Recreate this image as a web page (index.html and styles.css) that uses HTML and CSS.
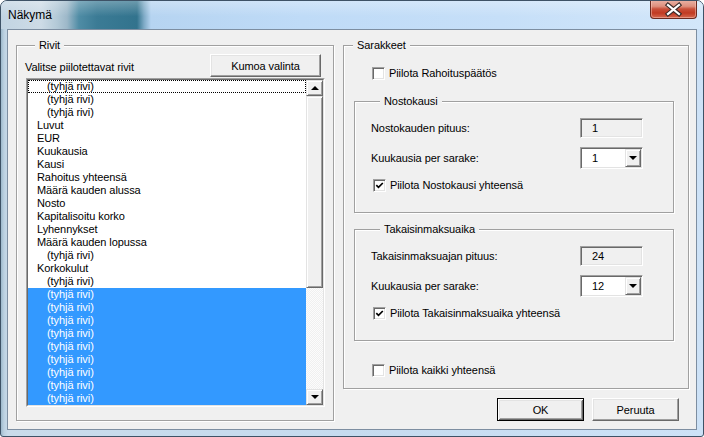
FILE: index.html
```html
<!DOCTYPE html>
<html lang="fi">
<head>
<meta charset="utf-8">
<title>Näkymä</title>
<link rel="stylesheet" href="styles.css">
</head>
<body>
<div class="window">
  <div class="titlebar">
    <span class="title">Näkymä</span>
    <div class="close">
      <svg width="45" height="17" viewBox="0 0 45 17">
        <path d="M17 4 L28 13 M28 4 L17 13" stroke="#3a2a28" stroke-width="4.4" stroke-linecap="square" fill="none"/>
        <path d="M17 4 L28 13 M28 4 L17 13" stroke="#fff" stroke-width="2.2" stroke-linecap="square" fill="none"/>
      </svg>
    </div>
  </div>
  <div class="client">
    <div class="group rivit">
      <div class="group-title">Rivit</div>
      <div class="rivit-head">
        <span class="hint">Valitse piilotettavat rivit</span>
        <button class="btn kumoa">Kumoa valinta</button>
      </div>
      <div class="listbox">
        <div class="list-inner">
          <ul class="items">
            <li class="ind focus">(tyhjä rivi)</li>
            <li class="ind">(tyhjä rivi)</li>
            <li class="ind">(tyhjä rivi)</li>
            <li>Luvut</li>
            <li>EUR</li>
            <li>Kuukausia</li>
            <li>Kausi</li>
            <li>Rahoitus yhteensä</li>
            <li>Määrä kauden alussa</li>
            <li>Nosto</li>
            <li>Kapitalisoitu korko</li>
            <li>Lyhennykset</li>
            <li>Määrä kauden lopussa</li>
            <li class="ind">(tyhjä rivi)</li>
            <li>Korkokulut</li>
            <li class="ind">(tyhjä rivi)</li>
            <li class="ind sel">(tyhjä rivi)</li>
            <li class="ind sel">(tyhjä rivi)</li>
            <li class="ind sel">(tyhjä rivi)</li>
            <li class="ind sel">(tyhjä rivi)</li>
            <li class="ind sel">(tyhjä rivi)</li>
            <li class="ind sel">(tyhjä rivi)</li>
            <li class="ind sel">(tyhjä rivi)</li>
            <li class="ind sel">(tyhjä rivi)</li>
            <li class="ind sel">(tyhjä rivi)</li>
          </ul>
          <div class="vscroll">
            <div class="raised sb-btn"><span class="tri-up"></span></div>
            <div class="raised sb-thumb"></div>
            <div class="sb-track"></div>
            <div class="raised sb-btn"><span class="tri-down"></span></div>
          </div>
        </div>
      </div>
    </div>

    <div class="right">
      <div class="group sarakkeet">
        <div class="group-title">Sarakkeet</div>
        <div class="check first">
          <span class="cb"></span>
          <span>Piilota Rahoituspäätös</span>
        </div>

        <div class="group sub nosto">
          <div class="group-title">Nostokausi</div>
          <div class="field-row">
            <span class="lbl">Nostokauden pituus:</span>
            <span class="ro-field">1</span>
          </div>
          <div class="field-row combo-row">
            <span class="lbl">Kuukausia per sarake:</span>
            <span class="combo"><span class="combo-val">1</span><span class="raised combo-btn"><span class="tri-down"></span></span></span>
          </div>
          <div class="check sub-check">
            <span class="cb"><svg width="9" height="9" viewBox="0 0 9 9"><path d="M1.3 4.2 L3.5 6.4 L7.8 2" stroke="#000" stroke-width="1.7" fill="none"/></svg></span>
            <span>Piilota Nostokausi yhteensä</span>
          </div>
        </div>

        <div class="group sub takaisin">
          <div class="group-title">Takaisinmaksuaika</div>
          <div class="field-row">
            <span class="lbl">Takaisinmaksuajan pituus:</span>
            <span class="ro-field">24</span>
          </div>
          <div class="field-row combo-row">
            <span class="lbl">Kuukausia per sarake:</span>
            <span class="combo"><span class="combo-val">12</span><span class="raised combo-btn"><span class="tri-down"></span></span></span>
          </div>
          <div class="check sub-check">
            <span class="cb"><svg width="9" height="9" viewBox="0 0 9 9"><path d="M1.3 4.2 L3.5 6.4 L7.8 2" stroke="#000" stroke-width="1.7" fill="none"/></svg></span>
            <span>Piilota Takaisinmaksuaika yhteensä</span>
          </div>
        </div>

        <div class="check kaikki">
          <span class="cb"></span>
          <span>Piilota kaikki yhteensä</span>
        </div>
      </div>
      <div class="buttons">
        <button class="btn dlg default">OK</button>
        <button class="btn dlg">Peruuta</button>
      </div>
    </div>
  </div>
</div>
</body>
</html>
```

FILE: styles.css
```css
* { box-sizing: border-box; }

html, body {
  margin: 0;
  padding: 0;
}

body {
  width: 704px;
  height: 437px;
  overflow: hidden;
  background: #fff;
  font-family: "Liberation Sans", Arial, sans-serif;
  font-size: 11px;
  letter-spacing: -0.08px;
  color: #000;
}

.window {
  width: 704px;
  height: 437px;
  display: flex;
  flex-direction: column;
  border: 1px solid #3e5266;
  border-radius: 7px 7px 3px 3px;
  overflow: hidden;
  background:
    linear-gradient(to right, #9db9cc 0, #bcd1e1 3px, #c9dbea 7px, #c6dbef 50%, #cde2f7 100%);
}

/* ---------- title bar ---------- */
.titlebar {
  height: 28px;
  flex: none;
  display: flex;
  align-items: flex-start;
  background:
    linear-gradient(to bottom, rgba(255,255,255,0.28), rgba(255,255,255,0) 55%),
    linear-gradient(to right, #c2d4e2 0, #cddbe6 40px, #b3c9d7 56px, #9db8c9 66px, #4f8ca5 78px, #3b7b95 96px, #32738d 136px, #7eaac6 143px, #b6d4f1 150px, #bfdbf7 300px, #c6dff8 500px, #d3e7fa 704px);
}

.title {
  align-self: center;
  padding-left: 7px;
  font-size: 12px;
  letter-spacing: 0;
  color: #000;
}

.close {
  margin-left: auto;
  margin-right: 6px;
  margin-top: -1px;
  width: 47px;
  height: 19px;
  border: 1px solid #6b2a20;
  border-top: none;
  border-radius: 0 0 4px 4px;
  background: linear-gradient(to bottom, #eab3a6 0, #de907e 35%, #c9503a 50%, #c13a22 72%, #d5684f 100%);
  box-shadow: inset 0 0 0 1px rgba(255,210,200,0.45);
  display: flex;
  align-items: center;
  justify-content: center;
}

/* ---------- client ---------- */
.client {
  flex: 1;
  margin: 0 6px 6px 6px;
  border: 1px solid #7d8ea1;
  background: #f0f0f0;
  display: flex;
  align-items: flex-start;
  padding: 15px 0 0 8px;
  gap: 9px;
}

.group {
  border: 1px solid #a0a0a0;
  box-shadow: inset 1px 1px 0 #fff, 1px 1px 0 #fff;
}

.group-title {
  width: max-content;
  margin: -7px 0 0 9px;
  padding: 0 4px;
  line-height: 13px;
  background: #f0f0f0;
}

/* ---------- Rivit ---------- */
.rivit {
  width: 318px;
  padding: 0 8px 13px 9px;
}

.rivit-head {
  display: flex;
  align-items: flex-end;
  justify-content: space-between;
  margin-top: 2px;
}

.hint {
  line-height: 13px;
  margin-bottom: 3px;
  margin-left: -1px;
}

.btn {
  font: inherit;
  letter-spacing: inherit;
  color: #000;
  background: #f0f0f0;
  border: 1px solid;
  border-color: #fff #696969 #696969 #fff;
  box-shadow: inset -1px -1px 0 #a0a0a0, inset 1px 1px 0 #e3e3e3;
  padding: 0;
  margin: 0;
  height: 23px;
}

.kumoa {
  width: 111px;
  margin-right: 4px;
}

.listbox {
  margin-top: 1px;
  width: 299px;
  height: 329px;
  border: 1px solid;
  border-color: #a0a0a0 #fff #fff #a0a0a0;
}

.list-inner {
  height: 100%;
  display: flex;
  border: 1px solid;
  border-color: #696969 #e3e3e3 #e3e3e3 #696969;
  background: #fff;
}

.items {
  flex: 1;
  list-style: none;
  margin: 0;
  padding: 0;
  overflow: hidden;
}

.items li {
  height: 13px;
  line-height: 13px;
  padding-left: 9px;
  white-space: nowrap;
}

.items li.ind { padding-left: 19px; }

.items li.sel {
  background: #3399ff;
  color: #fff;
}

.items li.focus {
  outline: 1px dotted #000;
  outline-offset: -1px;
}

.vscroll {
  width: 17px;
  flex: none;
  display: flex;
  flex-direction: column;
}

.raised {
  background: #f0f0f0;
  border: 1px solid;
  border-color: #e3e3e3 #696969 #696969 #e3e3e3;
  box-shadow: inset 1px 1px 0 #fff, inset -1px -1px 0 #a0a0a0;
}

.sb-btn {
  height: 16px;
  display: flex;
  align-items: center;
  justify-content: center;
}

.sb-thumb { height: 192px; }

.sb-track {
  flex: 1;
  background: repeating-conic-gradient(#f0f0f0 0 25%, #fcfcfc 0 50%) 0 0 / 2px 2px;
}

.tri-up, .tri-down {
  width: 0;
  height: 0;
  border-left: 4px solid transparent;
  border-right: 4px solid transparent;
}

.tri-up { border-bottom: 4px solid #000; }
.tri-down { border-top: 4px solid #000; }

/* ---------- right column ---------- */
.right {
  width: 346px;
  display: flex;
  flex-direction: column;
}

.sarakkeet {
  padding: 0 0 11px 0;
}

.check {
  display: flex;
  align-items: center;
  gap: 4px;
  height: 13px;
  line-height: 13px;
  white-space: nowrap;
}

.check.first { margin: 15px 0 0 28px; }
.check.kaikki { margin: 23px 0 0 28px; }

.cb {
  width: 13px;
  height: 13px;
  flex: none;
  border: 1px solid;
  border-color: #a0a0a0 #fff #fff #a0a0a0;
  box-shadow: inset 1px 1px 0 #696969, inset -1px -1px 0 #e3e3e3;
  background: #fff;
  display: flex;
  align-items: center;
  justify-content: center;
}

.sub {
  margin: 21px 14px 0 10px;
  padding: 0 0 20px 16px;
}

.sub.takaisin { margin-top: 16px; }

.field-row {
  display: flex;
  align-items: center;
  margin-top: 10px;
}

.combo-row { margin-top: 9px; }

.lbl {
  width: 209px;
  flex: none;
}

.ro-field {
  width: 63px;
  height: 20px;
  border: 1px solid;
  border-color: #a0a0a0 #fff #fff #a0a0a0;
  box-shadow: inset 1px 1px 0 #696969, inset -1px -1px 0 #e3e3e3;
  background: #f0f0f0;
  padding-left: 11px;
  line-height: 18px;
}

.combo {
  width: 63px;
  height: 22px;
  display: flex;
  border: 1px solid;
  border-color: #a0a0a0 #fff #fff #a0a0a0;
  box-shadow: inset 1px 1px 0 #696969, inset -1px -1px 0 #e3e3e3;
  background: #fff;
  padding: 1px;
}

.combo-val {
  flex: 1;
  padding-left: 10px;
  line-height: 18px;
}

.combo-btn {
  width: 16px;
  height: 18px;
  display: flex;
  align-items: center;
  justify-content: center;
}

.sub-check {
  margin: 10px 0 0 2px;
}

.buttons {
  display: flex;
  justify-content: flex-end;
  gap: 8px;
  margin-top: 9px;
  padding-right: 10px;
}

.dlg { width: 87px; }

.btn.default {
  border: 1px solid #000;
  box-shadow: inset 1px 1px 0 #fff, inset -1px -1px 0 #696969, inset 2px 2px 0 #e3e3e3, inset -2px -2px 0 #a0a0a0;
}
```
